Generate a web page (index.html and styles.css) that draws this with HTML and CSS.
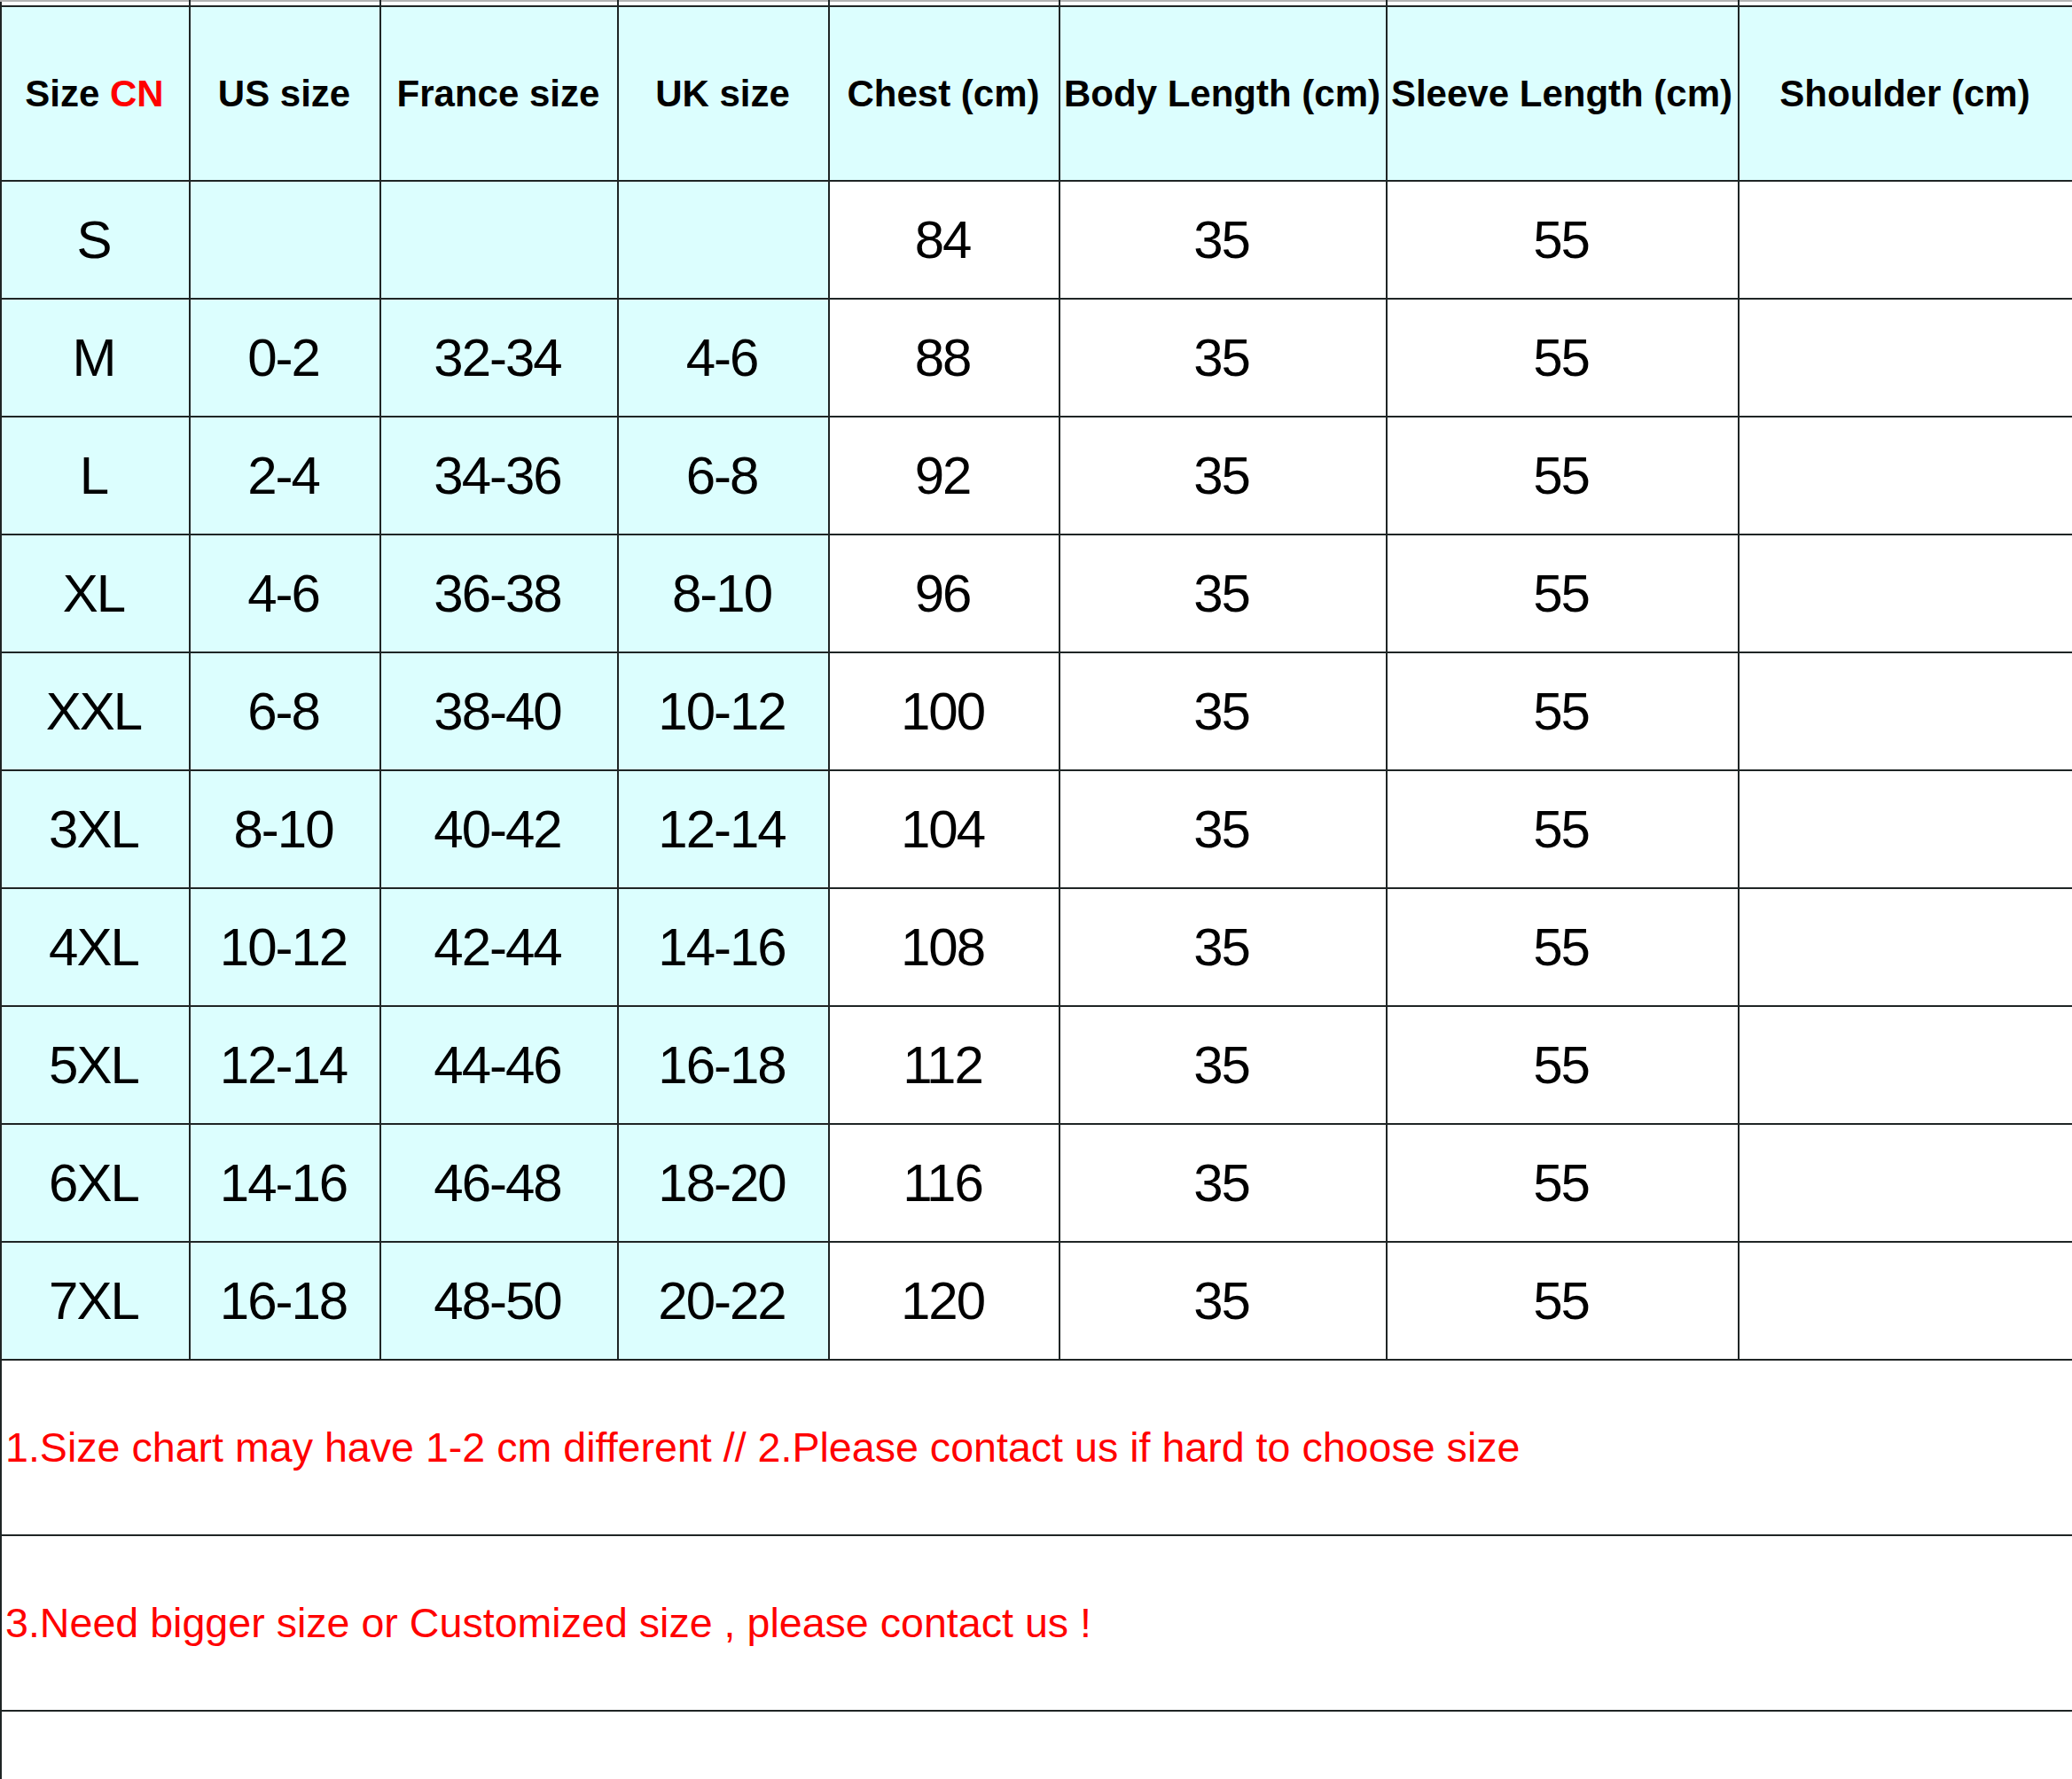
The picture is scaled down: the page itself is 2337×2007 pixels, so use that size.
FILE: index.html
```html
<!DOCTYPE html>
<html>
<head>
<meta charset="utf-8">
<link rel="stylesheet" href="styles.css">
</head>
<body>
<table class="chart">
  <colgroup>
    <col class="c1"><col class="c2"><col class="c3"><col class="c4"><col class="c5"><col class="c6"><col class="c7"><col class="c8">
  </colgroup>
  <tr class="pre"><td></td><td></td><td></td><td></td><td></td><td></td><td></td><td></td></tr>
  <tr class="head">
    <th>Size <span class="red">CN</span></th>
    <th>US size</th>
    <th>France size</th>
    <th>UK size</th>
    <th>Chest (cm)</th>
    <th>Body Length (cm)</th>
    <th>Sleeve Length (cm)</th>
    <th>Shoulder (cm)</th>
  </tr>
  <tr class="row"><td class="cy">S</td><td class="cy"></td><td class="cy"></td><td class="cy"></td><td>84</td><td>35</td><td>55</td><td></td></tr>
  <tr class="row"><td class="cy">M</td><td class="cy">0-2</td><td class="cy">32-34</td><td class="cy">4-6</td><td>88</td><td>35</td><td>55</td><td></td></tr>
  <tr class="row"><td class="cy">L</td><td class="cy">2-4</td><td class="cy">34-36</td><td class="cy">6-8</td><td>92</td><td>35</td><td>55</td><td></td></tr>
  <tr class="row"><td class="cy">XL</td><td class="cy">4-6</td><td class="cy">36-38</td><td class="cy">8-10</td><td>96</td><td>35</td><td>55</td><td></td></tr>
  <tr class="row"><td class="cy">XXL</td><td class="cy">6-8</td><td class="cy">38-40</td><td class="cy">10-12</td><td>100</td><td>35</td><td>55</td><td></td></tr>
  <tr class="row"><td class="cy">3XL</td><td class="cy">8-10</td><td class="cy">40-42</td><td class="cy">12-14</td><td>104</td><td>35</td><td>55</td><td></td></tr>
  <tr class="row"><td class="cy">4XL</td><td class="cy">10-12</td><td class="cy">42-44</td><td class="cy">14-16</td><td>108</td><td>35</td><td>55</td><td></td></tr>
  <tr class="row"><td class="cy">5XL</td><td class="cy">12-14</td><td class="cy">44-46</td><td class="cy">16-18</td><td>112</td><td>35</td><td>55</td><td></td></tr>
  <tr class="row"><td class="cy">6XL</td><td class="cy">14-16</td><td class="cy">46-48</td><td class="cy">18-20</td><td>116</td><td>35</td><td>55</td><td></td></tr>
  <tr class="row"><td class="cy">7XL</td><td class="cy">16-18</td><td class="cy">48-50</td><td class="cy">20-22</td><td>120</td><td>35</td><td>55</td><td></td></tr>
  <tr class="note"><td colspan="8">1.Size chart may have 1-2 cm different // 2.Please contact us if hard to choose size</td></tr>
  <tr class="note"><td colspan="8">3.Need bigger size or Customized size , please contact us !</td></tr>
  <tr class="tail"><td colspan="8"></td></tr>
</table>
</body>
</html>
```
FILE: styles.css
```css
html, body {
  margin: 0;
  padding: 0;
  background: #ffffff;
}

.chart {
  border-collapse: collapse;
  table-layout: fixed;
  width: 2337px;
  font-family: "Liberation Sans", Arial, sans-serif;
  color: #000;
}

.c1 { width: 213px; }
.c2 { width: 215px; }
.c3 { width: 268px; }
.c4 { width: 238px; }
.c5 { width: 260px; }
.c6 { width: 369px; }
.c7 { width: 397px; }
.c8 { width: 377px; }

.chart td, .chart th {
  border: 2px solid #1f2525;
  padding: 0;
  text-align: center;
  vertical-align: middle;
  overflow: hidden;
  white-space: nowrap;
}

.pre td {
  height: 4px;
  border-top: 2px solid #b4b4b4;
  background: #ffffff;
}

.head th {
  height: 195px;
  background: #dcfefe;
  font-weight: bold;
  font-size: 42px;
  padding-right: 2px;
}

.red { color: #ff0000; }

.row td {
  height: 131px;
  font-size: 60px;
  letter-spacing: -2px;
  padding-right: 4px;
}

.row td.cy { background: #dcfefe; }

.note td {
  height: 196px;
  text-align: left;
  padding-left: 4px;
  color: #ff0000;
  font-size: 46.6px;
  letter-spacing: 0;
}

.tail td {
  height: 80px;
  border-bottom: none;
}
```
